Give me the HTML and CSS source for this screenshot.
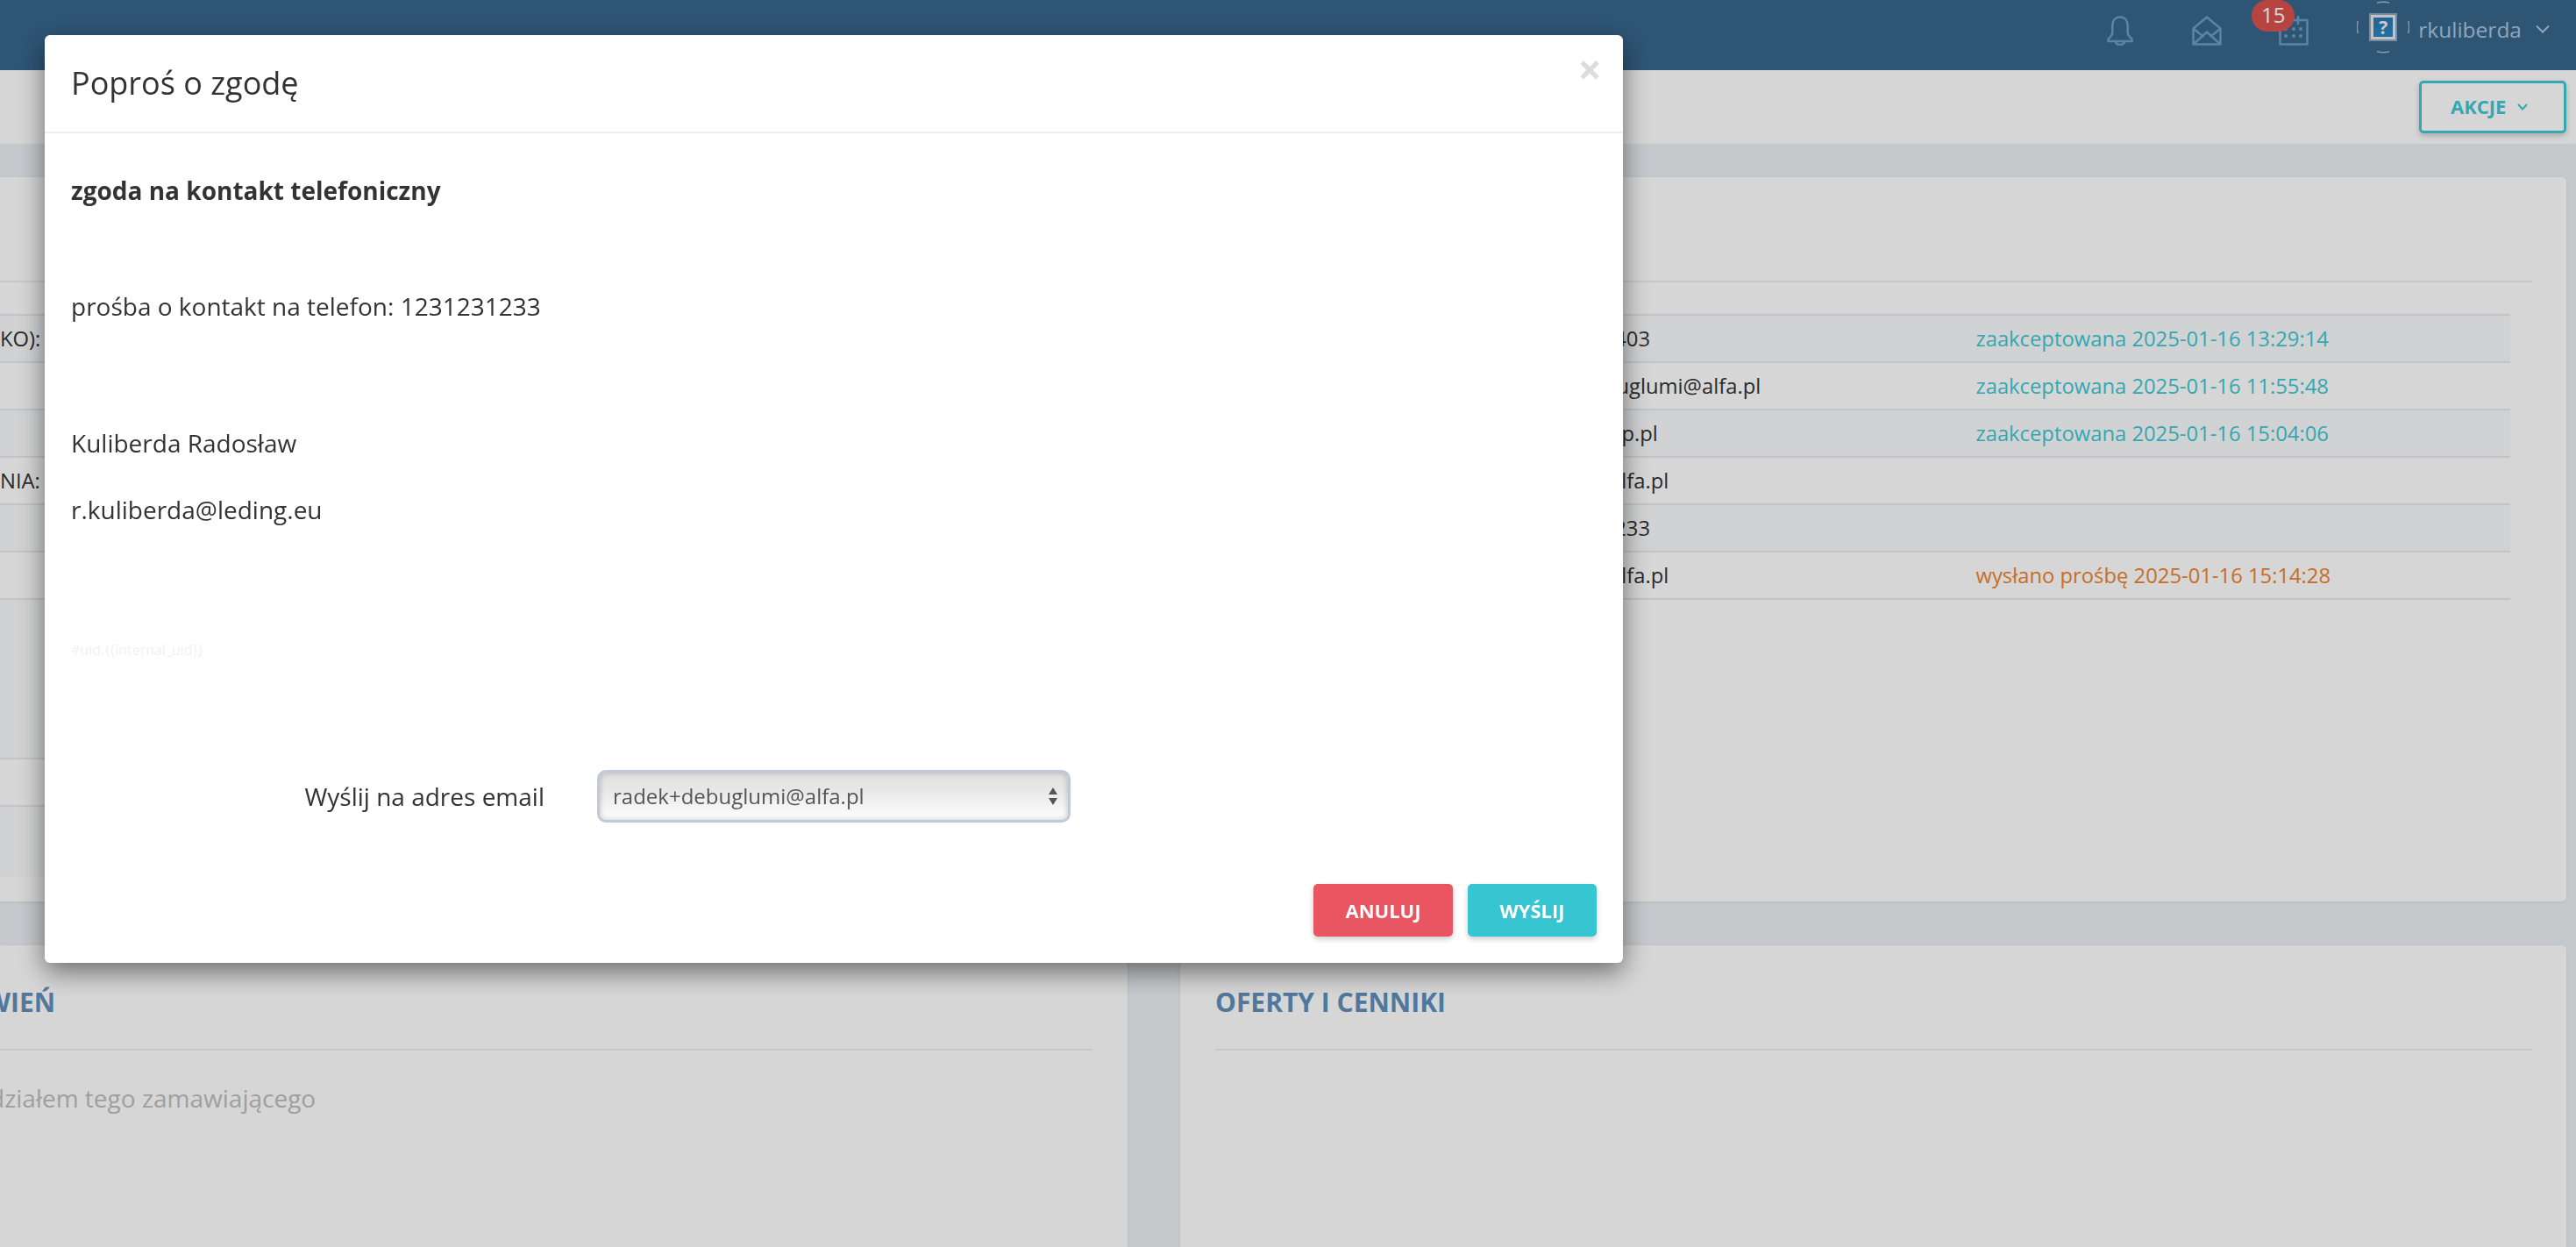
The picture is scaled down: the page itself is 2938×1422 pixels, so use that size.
FILE: index.html
```html
<!DOCTYPE html>
<html lang="pl">
<head>
    <meta charset="utf-8">
    <title>Poproś o zgodę</title>
    <link rel="stylesheet" href="styles.css">
</head>
<body>
    <header class="topbar">
        <div class="top-icon">
            <svg width="30" height="34" viewBox="0 0 30 34" fill="none"><path d="M15 1.500c-5.600 0-8.700 4.200-8.700 9.600v8c0 3-2.300 5.300-4.800 7.400v2.500h27v-2.500c-2.500-2.100-4.800-4.400-4.800-7.400v-8c0-5.400-3.100-9.600-8.700-9.600zM10 29c0 2.800 2.200 4 5 4s5-1.200 5-4"/></svg>
        </div>
        <div class="top-icon">
            <svg width="34" height="34" viewBox="0 0 34 34" fill="none"><path d="M1.500 32.500v-18l15.500-13 15.500 13v18zM1.500 14.500l11 9M32.500 14.500l-11 9M1.500 32.500l15.500-14 15.500 14"/></svg>
        </div>
        <div class="top-icon">
            <svg width="34" height="34" viewBox="0 0 34 34" fill="none"><path d="M1.500 5h31v27.500h-31zM22 1v8"/><g class="dots"><circle cx="8" cy="15" r="2"/><circle cx="17" cy="15" r="2"/><circle cx="25" cy="15" r="2"/><circle cx="8" cy="23" r="2"/><circle cx="17" cy="23" r="2"/><circle cx="25" cy="23" r="2"/></g></svg>
            <span class="badge">15</span>
        </div>
        <div class="user">
            <div class="avatar-wrap">
                <svg class="avatar-ring" width="60" height="60" viewBox="0 0 60 60" fill="none"><path d="M23 2.200a29 29 0 0 1 14 0M23 57.800a29 29 0 0 0 14 0M1.200 23a29 29 0 0 0 0 14M58.800 23a29 29 0 0 1 0 14"/></svg>
                <span class="avatar">?</span>
            </div>
            <span class="user-name">rkuliberda</span>
            <svg class="chevron" width="16" height="10" viewBox="0 0 16 10" fill="none"><path d="M1 1.500l7 7 7-7"/></svg>
        </div>
    </header>

    <div class="subbar">
        <button class="btn-actions">AKCJE
            <svg width="12" height="8" viewBox="0 0 12 8" fill="none"><path d="M1 1l5 5.500 5-5.500"/></svg>
        </button>
    </div>

    <main class="content">
        <section class="card card-top">
            <div class="card-rule"></div>
            <div class="rows">
                <div class="row"><span class="cell-label">KO):</span><span class="cell-value cell-phone">1231231403</span><span class="status ok">zaakceptowana 2025-01-16 13:29:14</span></div>
                <div class="row"><span class="cell-label"></span><span class="cell-value">radek+debuglumi@alfa.pl</span><span class="status ok">zaakceptowana 2025-01-16 11:55:48</span></div>
                <div class="row"><span class="cell-label"></span><span class="cell-value">radekrk@wp.pl</span><span class="status ok">zaakceptowana 2025-01-16 15:04:06</span></div>
                <div class="row"><span class="cell-label">NIA:</span><span class="cell-value">radek22@alfa.pl</span><span class="status"></span></div>
                <div class="row"><span class="cell-label"></span><span class="cell-value cell-phone">1231231233</span><span class="status"></span></div>
                <div class="row"><span class="cell-label"></span><span class="cell-value">radek22@alfa.pl</span><span class="status pending">wysłano prośbę 2025-01-16 15:14:28</span></div>
            </div>
            <div class="rows-low">
                <div class="low low-tall"></div>
                <div class="low low-plain"></div>
                <div class="low low-end"></div>
            </div>
        </section>

        <div class="cards-bottom">
            <section class="card card-left">
                <h2 class="card-title title-clip">WIEŃ</h2>
                <p class="muted">działem tego zamawiającego</p>
            </section>
            <section class="card card-right">
                <h2 class="card-title">OFERTY I CENNIKI</h2>
            </section>
        </div>
    </main>

    <div class="backdrop"></div>

    <div class="modal">
        <div class="modal-header">
            <h1>Poproś o zgodę</h1>
            <span class="close">×</span>
        </div>
        <div class="modal-body">
            <p class="consent-name">zgoda na kontakt telefoniczny</p>
            <p class="consent-phone">prośba o kontakt na telefon: 1231231233</p>
            <p class="consent-person">Kuliberda Radosław</p>
            <p class="consent-mail">r.kuliberda@leding.eu</p>
            <p class="consent-uid">#uid:{{internal_uid}}</p>
            <div class="send-row">
                <label>Wyślij na adres email</label>
                <div class="select">
                    <span>radek+debuglumi@alfa.pl</span>
                    <i class="arrows"></i>
                </div>
            </div>
        </div>
        <div class="modal-footer">
            <button class="btn btn-cancel">ANULUJ</button>
            <button class="btn btn-send">WYŚLIJ</button>
        </div>
    </div>
</body>
</html>
```
FILE: styles.css
```css
* { box-sizing: border-box; }
html, body { margin: 0; height: 100%; }
body { font-family: "Open Sans", sans-serif; font-size: 23.8px; color: #333; background: #ecf0f4; overflow: hidden; }

.topbar { height: 80px; background: #38668c; display: flex; align-items: flex-start; justify-content: flex-end; padding-right: 30px; }
.top-icon { position: relative; width: 34px; height: 34px; margin-top: 18px; margin-right: 65px; display: flex; justify-content: center; }
.top-icon svg path { stroke: #6c9dc8; stroke-width: 2.500; stroke-linejoin: round; stroke-linecap: round; }
.top-icon .dots circle { fill: #6c9dc8; }
.badge { position: absolute; left: -31px; top: -18px; width: 49px; height: 36px; background: #d9534f; color: #fff; border-radius: 18px; text-align: center; font-size: 24px; line-height: 34px; }
.user { display: flex; align-items: center; height: 66px; margin-left: -8px; }
.avatar-wrap { position: relative; width: 56px; height: 58px; margin-top: -4px; margin-right: 12px; display: flex; align-items: center; justify-content: center; }
.avatar-ring { position: absolute; left: -2px; top: -1px; }
.avatar-ring path { stroke: #a3b8ca; stroke-width: 1.500; }
.avatar { width: 28px; height: 28px; border: 3px solid #e6eaee; outline: 2px solid #8aa7c2; background: linear-gradient(#2a78ad, #2b86c2); color: #eee; font-size: 21px; font-weight: 700; text-align: center; line-height: 22px; }
.user-name { font-size: 24.500px; color: #aac6df; }
.chevron { margin-left: 16px; }
.chevron path { stroke: #aac6df; stroke-width: 2; }

.subbar { height: 84px; background: #fff; display: flex; justify-content: flex-end; align-items: center; padding: 0 11px 0 0; }
.btn-actions { width: 168px; height: 60px; border: 3px solid #3dc9d5; border-radius: 5px; background: #fff; color: #3dc9d5; font-family: inherit; font-size: 22px; font-weight: 700; box-shadow: 0 3px 6px rgba(0,0,0,.2); display: flex; align-items: center; padding: 0 0 3px 33px; }
.btn-actions svg { margin-left: 13px; margin-top: 3px; }
.btn-actions path { stroke: #3dc9d5; stroke-width: 2; }

.content { padding: 38px 11px 0 0; }
.card { background: #fff; border-radius: 0 5px 5px 0; box-shadow: 0 1px 4px rgba(0,0,0,.08); }
.card-top { height: 826px; padding-top: 116px; position: relative; }
.card-rule { position: absolute; left: 0; right: 39px; top: 118px; height: 2px; background: #eeeeee; }
.rows { margin: 40px 64px 0 0; border-top: 2px solid #e5e9ef; }
.row { display: grid; grid-template-columns: 1724px 529.500px 1fr; align-items: center; height: 54px; border-bottom: 2px solid #e5e9ef; }
.row:nth-child(odd) { background: #fafbfc; }
.cell-label { white-space: nowrap; text-align: right; padding-right: 1680px; }
.cell-phone { padding-left: 22px; }
.status { white-space: nowrap; }
.status.ok { color: #3dc9d5; }
.status.pending { color: #ee8430; }
.rows-low { margin-right: 2200px; }
.low { border-bottom: 2px solid #e5e9ef; }
.low-tall { height: 182px; background: #fafbfc; }
.low-plain { height: 54px; }
.low-end { height: 80px; background: #fafbfc; border-bottom: 0; }

.cards-bottom { display: flex; gap: 60px; margin-top: 50px; }
.card-left { width: 1286px; height: 400px; padding-right: 40px; border-radius: 0 5px 0 0; }
.card-right { flex: 1; height: 400px; padding: 0 39px 0 40px; border-radius: 5px 5px 0 0; }
.card-title { margin: 0; height: 120px; padding-top: 48px; font-size: 30px; line-height: 34px; font-weight: 700; color: #6090ba; border-bottom: 2px solid #eee; }
.title-clip { margin-left: -17px; }
.muted { margin: 35px 0 0 -12px; color: #bebebe; font-size: 28px; line-height: 38px; }

.backdrop { position: fixed; inset: 0; background: rgba(0,0,0,.16); }

.modal { position: fixed; left: 51px; top: 40px; width: 1800px; height: 1058px; background: #fff; border-radius: 6px; box-shadow: 0 10px 30px rgba(0,0,0,.5); }
.modal-header { height: 112px; border-bottom: 2px solid #eee; padding: 0 30px; display: flex; justify-content: space-between; }
.modal-header h1 { margin: 28px 0 0; font-size: 36px; font-weight: 400; line-height: 54px; }
.close { font-size: 48px; line-height: 48px; margin: 15px -6px 0 0; color: #dcdcdc; font-weight: 700; }
.modal-body { padding: 45px 30px 0; font-size: 28px; line-height: 40px; }
.modal-body p { margin: 0; }
.consent-name { font-weight: 700; height: 132px; }
.consent-phone { height: 156px; }
.consent-person { height: 76px; }
.consent-mail { height: 160px; }
.consent-uid { height: 157px; font-size: 16px; color: #eff1f2; }
.send-row { display: flex; align-items: center; }
.send-row label { width: 540px; text-align: right; }
.select { margin-left: 60px; width: 540px; height: 60px; border: 3px solid #c0cadb; border-radius: 10px; background: linear-gradient(#e0e0e0, #e8e8e8 40%, #fff); box-shadow: inset 0 0 7px rgba(0,0,0,.22); display: flex; align-items: center; justify-content: space-between; padding: 0 12px 0 15px; color: #555; font-size: 24px; }
.arrows { display: flex; flex-direction: column; justify-content: space-between; height: 20px; }
.arrows::before { content: ""; border: 5px solid transparent; border-top: 0; border-bottom: 8px solid #555; }
.arrows::after { content: ""; border: 5px solid transparent; border-bottom: 0; border-top: 8px solid #555; }
.modal-footer { position: absolute; right: 30px; bottom: 30px; display: flex; gap: 17px; }
.btn { height: 60px; border: 0; border-radius: 5px; color: #fff; font-family: inherit; font-size: 22px; font-weight: 700; box-shadow: 0 3px 6px rgba(0,0,0,.2); }
.btn-cancel { width: 159px; background: #e95561; }
.btn-send { width: 147px; background: #37c5d2; }
```
